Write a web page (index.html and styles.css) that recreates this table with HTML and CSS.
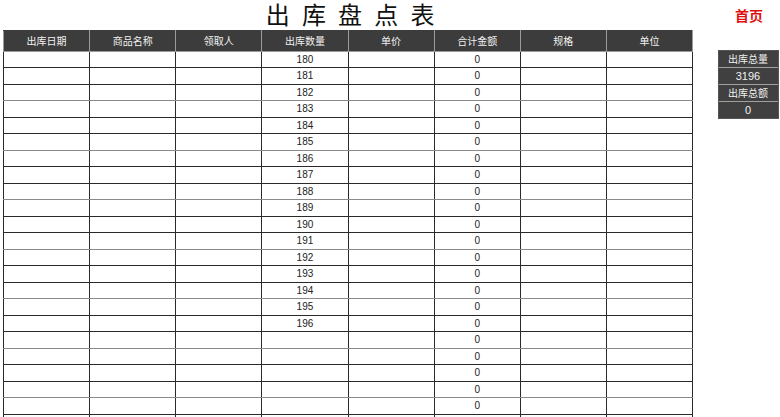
FILE: index.html
```html
<!DOCTYPE html>
<html lang="zh">
<head>
<meta charset="utf-8">
<title>出库盘点表</title>
<link rel="stylesheet" href="styles.css">
</head>
<body>
<div class="page">
  <main class="main">
    <h1 class="title">出 库 盘 点 表</h1>
    <table class="grid">
      <thead>
        <tr><th>出库日期</th><th>商品名称</th><th>领取人</th><th>出库数量</th><th>单价</th><th>合计金额</th><th>规格</th><th>单位</th></tr>
      </thead>
      <tbody>
        <tr><td></td><td></td><td></td><td>180</td><td></td><td>0</td><td></td><td></td></tr>
        <tr><td></td><td></td><td></td><td>181</td><td></td><td>0</td><td></td><td></td></tr>
        <tr><td></td><td></td><td></td><td>182</td><td></td><td>0</td><td></td><td></td></tr>
        <tr><td></td><td></td><td></td><td>183</td><td></td><td>0</td><td></td><td></td></tr>
        <tr><td></td><td></td><td></td><td>184</td><td></td><td>0</td><td></td><td></td></tr>
        <tr><td></td><td></td><td></td><td>185</td><td></td><td>0</td><td></td><td></td></tr>
        <tr><td></td><td></td><td></td><td>186</td><td></td><td>0</td><td></td><td></td></tr>
        <tr><td></td><td></td><td></td><td>187</td><td></td><td>0</td><td></td><td></td></tr>
        <tr><td></td><td></td><td></td><td>188</td><td></td><td>0</td><td></td><td></td></tr>
        <tr><td></td><td></td><td></td><td>189</td><td></td><td>0</td><td></td><td></td></tr>
        <tr><td></td><td></td><td></td><td>190</td><td></td><td>0</td><td></td><td></td></tr>
        <tr><td></td><td></td><td></td><td>191</td><td></td><td>0</td><td></td><td></td></tr>
        <tr><td></td><td></td><td></td><td>192</td><td></td><td>0</td><td></td><td></td></tr>
        <tr><td></td><td></td><td></td><td>193</td><td></td><td>0</td><td></td><td></td></tr>
        <tr><td></td><td></td><td></td><td>194</td><td></td><td>0</td><td></td><td></td></tr>
        <tr><td></td><td></td><td></td><td>195</td><td></td><td>0</td><td></td><td></td></tr>
        <tr><td></td><td></td><td></td><td>196</td><td></td><td>0</td><td></td><td></td></tr>
        <tr><td></td><td></td><td></td><td></td><td></td><td>0</td><td></td><td></td></tr>
        <tr><td></td><td></td><td></td><td></td><td></td><td>0</td><td></td><td></td></tr>
        <tr><td></td><td></td><td></td><td></td><td></td><td>0</td><td></td><td></td></tr>
        <tr><td></td><td></td><td></td><td></td><td></td><td>0</td><td></td><td></td></tr>
        <tr><td></td><td></td><td></td><td></td><td></td><td>0</td><td></td><td></td></tr>
        <tr><td></td><td></td><td></td><td></td><td></td><td></td><td></td><td></td></tr>
      </tbody>
    </table>
  </main>
  <aside class="side">
    <a class="home" href="#">首页</a>
    <div class="summary">
      <div class="cell">出库总量</div>
      <div class="cell">3196</div>
      <div class="cell">出库总额</div>
      <div class="cell">0</div>
    </div>
  </aside>
</div>
</body>
</html>
```

FILE: styles.css
```css
html, body {
  margin: 0;
  padding: 0;
  background: #ffffff;
  overflow: hidden;
}
body {
  height: 417px;
  font-family: "Liberation Sans", "Noto Sans CJK SC", sans-serif;
  color: #222;
}
.page {
  display: flex;
  align-items: flex-start;
  padding-left: 3px;
}
.main {
  width: 690px;
  flex: none;
}
.title {
  margin: 0;
  height: 29px;
  padding-top: 1px;
  font-family: "Liberation Sans", "Noto Sans CJK SC", sans-serif;
  font-weight: 400;
  font-size: 24px;
  line-height: 29px;
  letter-spacing: 2.75px;
  text-align: center;
  color: #111;
  padding-left: 7px;
}
.grid {
  width: 690px;
  table-layout: fixed;
  border-collapse: collapse;
  border-left: 1px solid #777;
}
.grid th {
  height: 20px;
  padding: 0;
  background: #3c3c3c;
  color: #f2f2f2;
  font-family: "Noto Sans CJK SC", sans-serif;
  font-weight: 400;
  font-size: 10px;
  line-height: 12px;
  border: 1px solid #9a9a9a;
  border-top-color: #3c3c3c;
  text-align: center;
  vertical-align: middle;
}
.grid td {
  padding: 0;
  border: 1px solid #2a2a2a;
  font-size: 10px;
  line-height: 12px;
  text-align: center;
  color: #222;
}
.grid tbody tr:nth-child(odd) td { height: 15px; }
.grid tbody tr:nth-child(even) td { height: 16px; }
.grid tbody tr:nth-child(3n) td { border-bottom-color: #8a8a8a; }
.side {
  display: flex;
  flex-direction: column;
  align-items: center;
  margin-left: 25px;
  width: 60px;
}
.home {
  margin-top: 6px;
  height: 18px;
  font-family: "Noto Sans CJK SC", sans-serif;
  font-weight: 700;
  font-size: 14px;
  line-height: 18px;
  color: #e01010;
  text-decoration: none;
  padding-left: 2px;
}
.summary {
  margin-top: 26px;
  width: 59px;
  background: #404040;
  border: 1px solid #555;
}
.cell {
  height: 16px;
  line-height: 16px;
  text-align: center;
  color: #f0f0f0;
  font-family: "Noto Sans CJK SC", sans-serif;
  font-size: 10px;
  border-bottom: 1px solid #a0a0a0;
}
.cell:nth-child(2), .cell:nth-child(4) {
  font-family: "Liberation Sans", sans-serif;
  font-size: 11px;
}
.cell:last-child { border-bottom: none; }
```
